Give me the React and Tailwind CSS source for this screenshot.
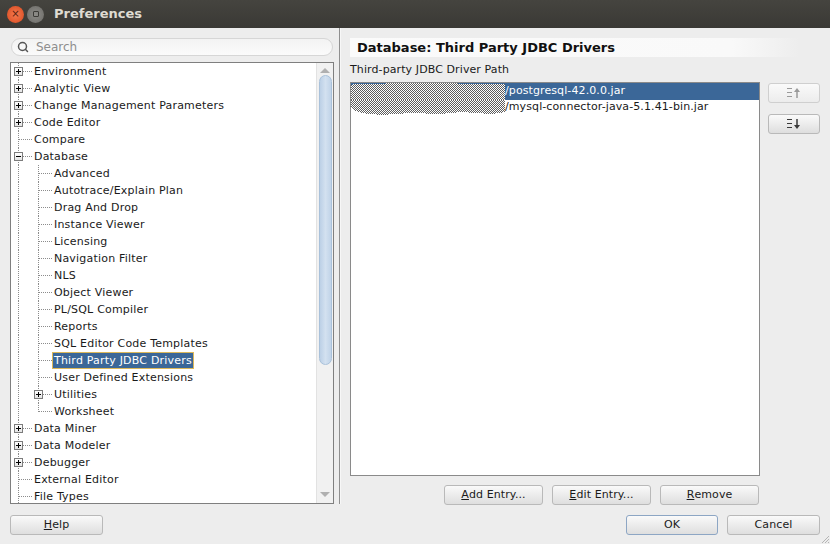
import { Search } from "lucide-react";

/* Preferences dialog (SQL Developer style) */

const TREE = [
  { label: "Environment", depth: 0, exp: "plus" },
  { label: "Analytic View", depth: 0, exp: "plus" },
  { label: "Change Management Parameters", depth: 0, exp: "plus" },
  { label: "Code Editor", depth: 0, exp: "plus" },
  { label: "Compare", depth: 0 },
  { label: "Database", depth: 0, exp: "minus" },
  { label: "Advanced", depth: 1 },
  { label: "Autotrace/Explain Plan", depth: 1 },
  { label: "Drag And Drop", depth: 1 },
  { label: "Instance Viewer", depth: 1 },
  { label: "Licensing", depth: 1 },
  { label: "Navigation Filter", depth: 1 },
  { label: "NLS", depth: 1 },
  { label: "Object Viewer", depth: 1 },
  { label: "PL/SQL Compiler", depth: 1 },
  { label: "Reports", depth: 1 },
  { label: "SQL Editor Code Templates", depth: 1 },
  { label: "Third Party JDBC Drivers", depth: 1, selected: true },
  { label: "User Defined Extensions", depth: 1 },
  { label: "Utilities", depth: 1, exp: "plus" },
  { label: "Worksheet", depth: 1, last: true },
  { label: "Data Miner", depth: 0, exp: "plus" },
  { label: "Data Modeler", depth: 0, exp: "plus" },
  { label: "Debugger", depth: 0, exp: "plus" },
  { label: "External Editor", depth: 0 },
  { label: "File Types", depth: 0 },
];

// dithered blob that hides the local path in the driver list
function Mask({ id, d, h }) {
  return (
    <svg width="154" height={h} className="shrink-0">
      <defs>
        <pattern id={id} width="2" height="2" patternUnits="userSpaceOnUse">
          <rect width="2" height="2" fill="#ffffff" />
          <rect x="0" y="0" width="1" height="1" fill="#5e5e5e" />
          <rect x="1" y="1" width="1" height="1" fill="#5e5e5e" />
        </pattern>
      </defs>
      <path d={d} fill={`url(#${id})`} shapeRendering="crispEdges" />
    </svg>
  );
}

function Expander({ type, left }) {
  return (
    <span
      className={`absolute top-[4px] ${left} flex h-[9px] w-[9px] items-center justify-center border border-[#7c7c7c] bg-linear-to-b from-white to-[#e4e4e4]`}
    >
      <span className="absolute h-px w-[5px] bg-black" />
      {type === "plus" && <span className="absolute h-[5px] w-px bg-black" />}
    </span>
  );
}

function TreeRow({ item }) {
  const { label, depth, exp, last, selected } = item;
  return (
    <div className="relative flex h-[17px] items-center">
      <span className="absolute bottom-0 left-[7px] top-0 border-l border-dotted border-[#8c8c8c]" />
      {depth === 1 && (
        <span
          className={`absolute left-[27px] top-0 border-l border-dotted border-[#8c8c8c] ${
            last ? "h-[9px]" : "bottom-0"
          }`}
        />
      )}
      <span
        className={`absolute top-[8px] border-t border-dotted border-[#8c8c8c] ${
          depth ? "left-[28px] w-[13px]" : "left-[8px] w-[13px]"
        }`}
      />
      {exp && <Expander type={exp} left={depth ? "left-[23px]" : "left-[3px]"} />}
      <span
        className={`relative ${depth ? "ml-[41px]" : "ml-[21px]"} border px-px leading-[15px] tracking-[0.2px] ${
          selected
            ? "border-[#dcb85a] bg-[#3b6798] text-white"
            : "border-transparent text-[#1a1a1a]"
        }`}
      >
        {label}
      </span>
    </div>
  );
}

function Btn({ children, className = "", focus }) {
  return (
    <button
      className={`flex h-[20px] items-center justify-center rounded-[3px] border bg-linear-to-b from-[#fafafa] to-[#dedede] text-[11px] tracking-[0.1px] text-[#1a1a1a] ${
        focus ? "border-[#8da6c4]" : "border-[#b9b9b9]"
      } ${className}`}
    >
      {children}
    </button>
  );
}

function MoveIcon({ down, disabled }) {
  const c = disabled ? "#9a9a9a" : "#3a3a3a";
  return (
    <svg width="18" height="12" viewBox="0 0 18 12">
      <line x1="2" y1="1.5" x2="7" y2="1.5" stroke={c} strokeWidth="1" />
      <line x1="2" y1="5.5" x2="7" y2="5.5" stroke={c} strokeWidth="1" />
      <line x1="2" y1="9.5" x2="7" y2="9.5" stroke={c} strokeWidth="1" />
      {down ? (
        <>
          <line x1="12" y1="1" x2="12" y2="8" stroke={c} strokeWidth="1.5" />
          <path d="M9 7 L15 7 L12 11 Z" fill={c} />
        </>
      ) : (
        <>
          <line x1="12" y1="4" x2="12" y2="11" stroke={c} strokeWidth="1.5" />
          <path d="M9 5 L15 5 L12 1 Z" fill={c} />
        </>
      )}
    </svg>
  );
}

export default function App() {
  return (
    <div className="flex h-[544px] w-[830px] flex-col overflow-hidden bg-[#ededed] font-['DejaVu_Sans',sans-serif] text-[11px]">
      {/* title bar */}
      <div className="flex h-[28px] shrink-0 items-center bg-linear-to-b from-[#45443f] to-[#3a3935] pl-[7px]">
        <span className="flex h-[17px] w-[17px] items-center justify-center rounded-full bg-radial from-[#f47a4f] to-[#d9471a] text-[10px] leading-none text-[#5a2010]">
          ×
        </span>
        <span className="ml-[3px] flex h-[17px] w-[17px] items-center justify-center rounded-full bg-radial from-[#8d8c88] to-[#6c6b67]">
          <span className="h-[6px] w-[6px] rounded-[1px] border border-[#3d3c38]" />
        </span>
        <span className="ml-[10px] text-[13px] font-bold text-[#dfdbd2]">Preferences</span>
      </div>

      {/* body */}
      <div className="flex flex-1 pt-[10px]">
        {/* left */}
        <div className="ml-[10px] flex w-[324px] flex-col">
          <div className="mx-px flex h-[18px] items-center rounded-full border border-[#d6d6d6] bg-linear-to-b from-[#f3f3f3] to-[#fbfbfb] pl-[5px]">
            <Search size={12} strokeWidth={3} className="text-[#555]" />
            <span className="ml-[7px] text-[12px] text-[#8e8e8e]">Search</span>
          </div>
          <div className="mt-[6px] flex h-[442px] border border-[#7f7f7f] bg-white">
            <div className="flex-1 overflow-hidden">
              {TREE.map((item) => (
                <TreeRow key={item.label} item={item} />
              ))}
            </div>
            <div className="relative flex w-[17px] flex-col border-l border-[#e2e2e2] bg-[#f1f1f1]">
              <span className="mx-auto mt-[5px] h-0 w-0 border-x-[5px] border-b-[5px] border-x-transparent border-b-[#b0b0b0]" />
              <span className="mx-auto mt-[2px] h-[290px] w-[13px] rounded-full border border-[#a9c1da] bg-linear-to-r from-[#bcd0e6] via-[#d3e1f0] to-[#c0d3e8]" />
              <span className="mx-auto mt-auto mb-[6px] h-0 w-0 border-x-[5px] border-t-[5px] border-x-transparent border-t-[#b0b0b0]" />
            </div>
          </div>
        </div>

        {/* divider */}
        <div className="ml-[5px] -mt-[10px] h-[476px] w-[2px] border-l border-[#8f8f8f] bg-[#f7f7f7]" />

        {/* right */}
        <div className="ml-[9px] flex w-[470px] flex-col">
          <div className="flex h-[19px] w-[450px] items-center bg-linear-to-r from-[#fbfbfb] via-[#f9f9f9] via-85% to-[#ededed] pl-[7px] text-[13px] font-bold text-[#111]">
            Database: Third Party JDBC Drivers
          </div>
          <div className="mt-[6px] leading-[14px] tracking-[0.1px] text-[#1a1a1a]">
            Third-party JDBC Driver Path
          </div>
          <div className="mt-[5px] flex">
            <div className="h-[394px] w-[410px] overflow-hidden border border-[#8a8a8a] bg-white">
              <div className="flex h-[17px] items-center bg-[#3b6798] tracking-[0.1px] text-white">
                <Mask
                  id="m1"
                  h={17}
                  d="M0 3 Q2 0 10 1 L60 0 L154 1 L154 17 L0 17 Z"
                />
                <span>/postgresql-42.0.0.jar</span>
              </div>
              <div className="flex h-[16px] items-start tracking-[0.1px] text-[#1a1a1a]">
                <Mask
                  id="m2"
                  h={15}
                  d="M0 0 L154 0 L154 12 L140 14 L110 12 L90 14 L60 13 L30 15 L10 13 L2 10 L0 6 Z"
                />
                <span className="leading-[14px]">/mysql-connector-java-5.1.41-bin.jar</span>
              </div>
            </div>
            <div className="ml-[8px] flex flex-col gap-[11px] pt-px">
              <Btn className="w-[52px] border-[#cfcfcf] from-[#f0f0f0] to-[#ececec]">
                <MoveIcon disabled />
              </Btn>
              <Btn className="w-[52px]">
                <MoveIcon down />
              </Btn>
            </div>
          </div>
          <div className="mt-[9px] flex gap-[9px] pl-[94px]">
            <Btn className="w-[99px]">
              <u>A</u>dd Entry...
            </Btn>
            <Btn className="w-[99px]">
              <u>E</u>dit Entry...
            </Btn>
            <Btn className="w-[99px]">
              <u>R</u>emove
            </Btn>
          </div>
        </div>
      </div>

      {/* footer */}
      <div className="relative flex h-[29px] shrink-0 items-start px-[10px]">
        <Btn className="w-[93px]">
          <u>H</u>elp
        </Btn>
        <div className="ml-auto flex gap-[9px]">
          <Btn className="w-[92px]" focus>
            OK
          </Btn>
          <Btn className="w-[93px]">Cancel</Btn>
        </div>
        <svg className="absolute bottom-0 right-0" width="10" height="10" viewBox="0 0 10 10">
          <path d="M9 2 L2 9 M9 5 L5 9 M9 8 L8 9" stroke="#b5b5b5" strokeWidth="1" />
        </svg>
      </div>
    </div>
  );
}
